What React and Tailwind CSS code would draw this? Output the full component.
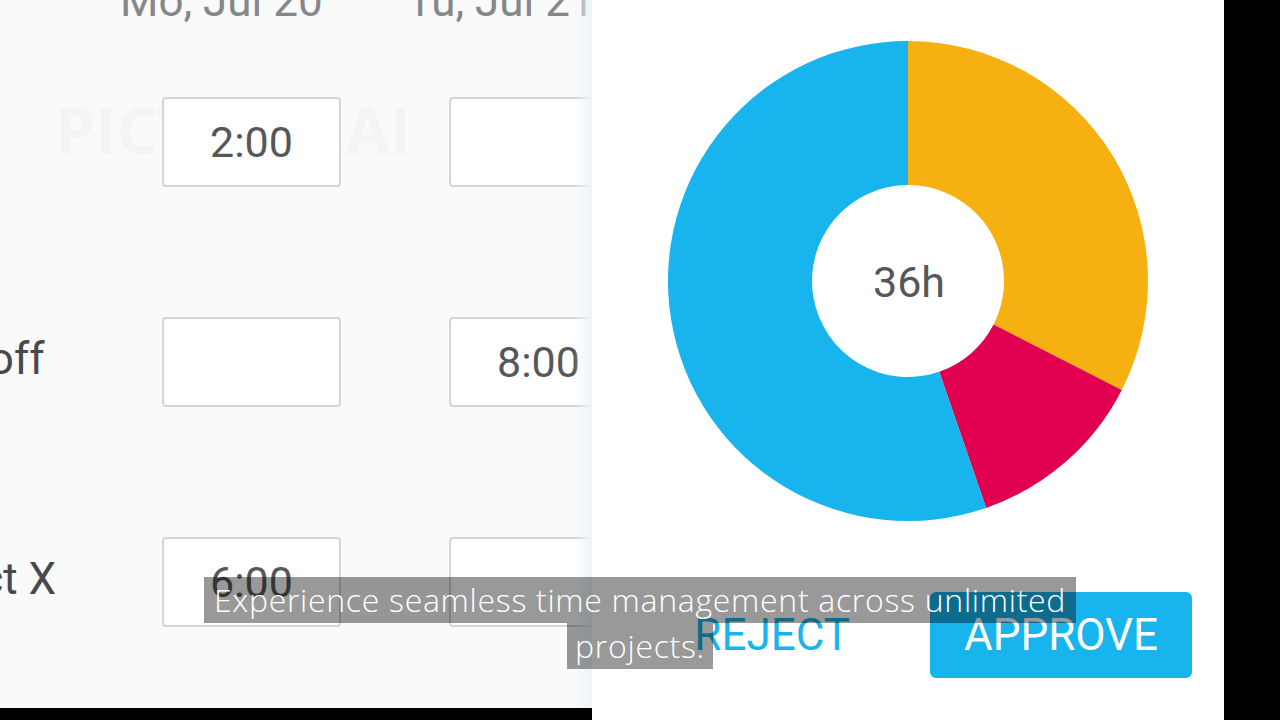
const rows = [
  { label: '', cells: ['2:00', ''] },
  { label: 'Time off', cells: ['', '8:00'] },
  { label: 'Project X', cells: ['6:00', ''] },
];

const TimeBox = ({ value }) => (
  <div className="w-[179px] h-[90px] shrink-0 rounded-[4px] border-2 border-[#d3d5d6] bg-white flex items-center justify-center text-[43px] leading-none text-[#55585a]">
    {value}
  </div>
);

const Donut = () => (
  <svg width="480" height="480" viewBox="0 0 480 480">
    <path d="M240 0 A240 240 0 0 1 453.8 348.96 L325.54 283.58 A96 96 0 0 0 240 144 Z" fill="#f6b011" />
    <path d="M453.8 348.96 A240 240 0 0 1 318.14 466.92 L271.26 330.77 A96 96 0 0 0 325.54 283.58 Z" fill="#e0004f" />
    <path d="M318.14 466.92 A240 240 0 1 1 240 0 L240 144 A96 96 0 1 0 271.26 330.77 Z" fill="#17b4ed" />
    <text x="241" y="256" textAnchor="middle" fontSize="43" fill="#545658" fontFamily="Roboto, sans-serif">36h</text>
  </svg>
);

export default function App() {
  return (
    <div className="relative w-[1280px] h-[720px] flex bg-black overflow-hidden font-['Roboto',sans-serif]">
      {/* timesheet, zoomed */}
      <div className="w-[592px] h-full flex flex-col shrink-0">
        <div className="relative flex-1 bg-[#fafafa] overflow-hidden">
          {/* faint watermark behind the grid */}
          <div className="absolute left-[55px] top-[44px] text-[36px] font-bold leading-none text-black/[0.025] whitespace-nowrap font-['Open_Sans',sans-serif]">
            VIDEO MADE WITH
            <div className="mt-[18px] text-[64px]">PICTORY.AI</div>
          </div>
          <div className="relative flex pl-[120px] -mt-[21px] h-[44px] text-[44px] leading-[44px] text-[#85888a] whitespace-nowrap">
            <div className="w-[287px] shrink-0">Mo, Jul 20</div>
            <div className="w-[287px] shrink-0">Tu, Jul 21</div>
          </div>
          <div className="relative flex flex-col gap-[130px] mt-[74px]">
            {rows.map((r, i) => (
              <div key={i} className="flex items-center h-[90px]">
                <div className="w-[162px] shrink-0">
                  <span className="block -ml-[121px] -mt-[6px] whitespace-nowrap text-[44px] leading-none text-[#47494b]">{r.label}</span>
                </div>
                <div className="flex gap-[108px]">
                  {r.cells.map((c, j) => (
                    <TimeBox key={j} value={c} />
                  ))}
                </div>
              </div>
            ))}
          </div>
          <div className="absolute right-0 top-0 bottom-0 w-[18px] bg-gradient-to-r from-transparent to-[#ecf5fa]" />
        </div>
        <div className="h-[12px] bg-black" />
      </div>

      {/* approval panel */}
      <div className="w-[632px] h-full bg-white flex flex-col items-center shrink-0">
        <div className="mt-[41px]">
          <Donut />
        </div>
        <div className="w-full flex items-center justify-end gap-[80px] pr-[32px] mt-[71px]">
          <span className="text-[44px] leading-none text-[#17b4ed]">REJECT</span>
          <button className="w-[262px] h-[86px] rounded-[6px] bg-[#17b4ed] text-white text-[44px] leading-none">APPROVE</button>
        </div>
      </div>

      {/* subtitle */}
      <div className="absolute left-0 right-0 top-[577px] flex flex-col items-center font-['Open_Sans',sans-serif] font-light text-[32px] tracking-[0.7px] leading-[46px] text-white">
        <span className="bg-black/40 px-[10px]">Experience seamless time management across unlimited</span>
        <span className="bg-black/40 px-[8px]">projects.</span>
      </div>
    </div>
  );
}
